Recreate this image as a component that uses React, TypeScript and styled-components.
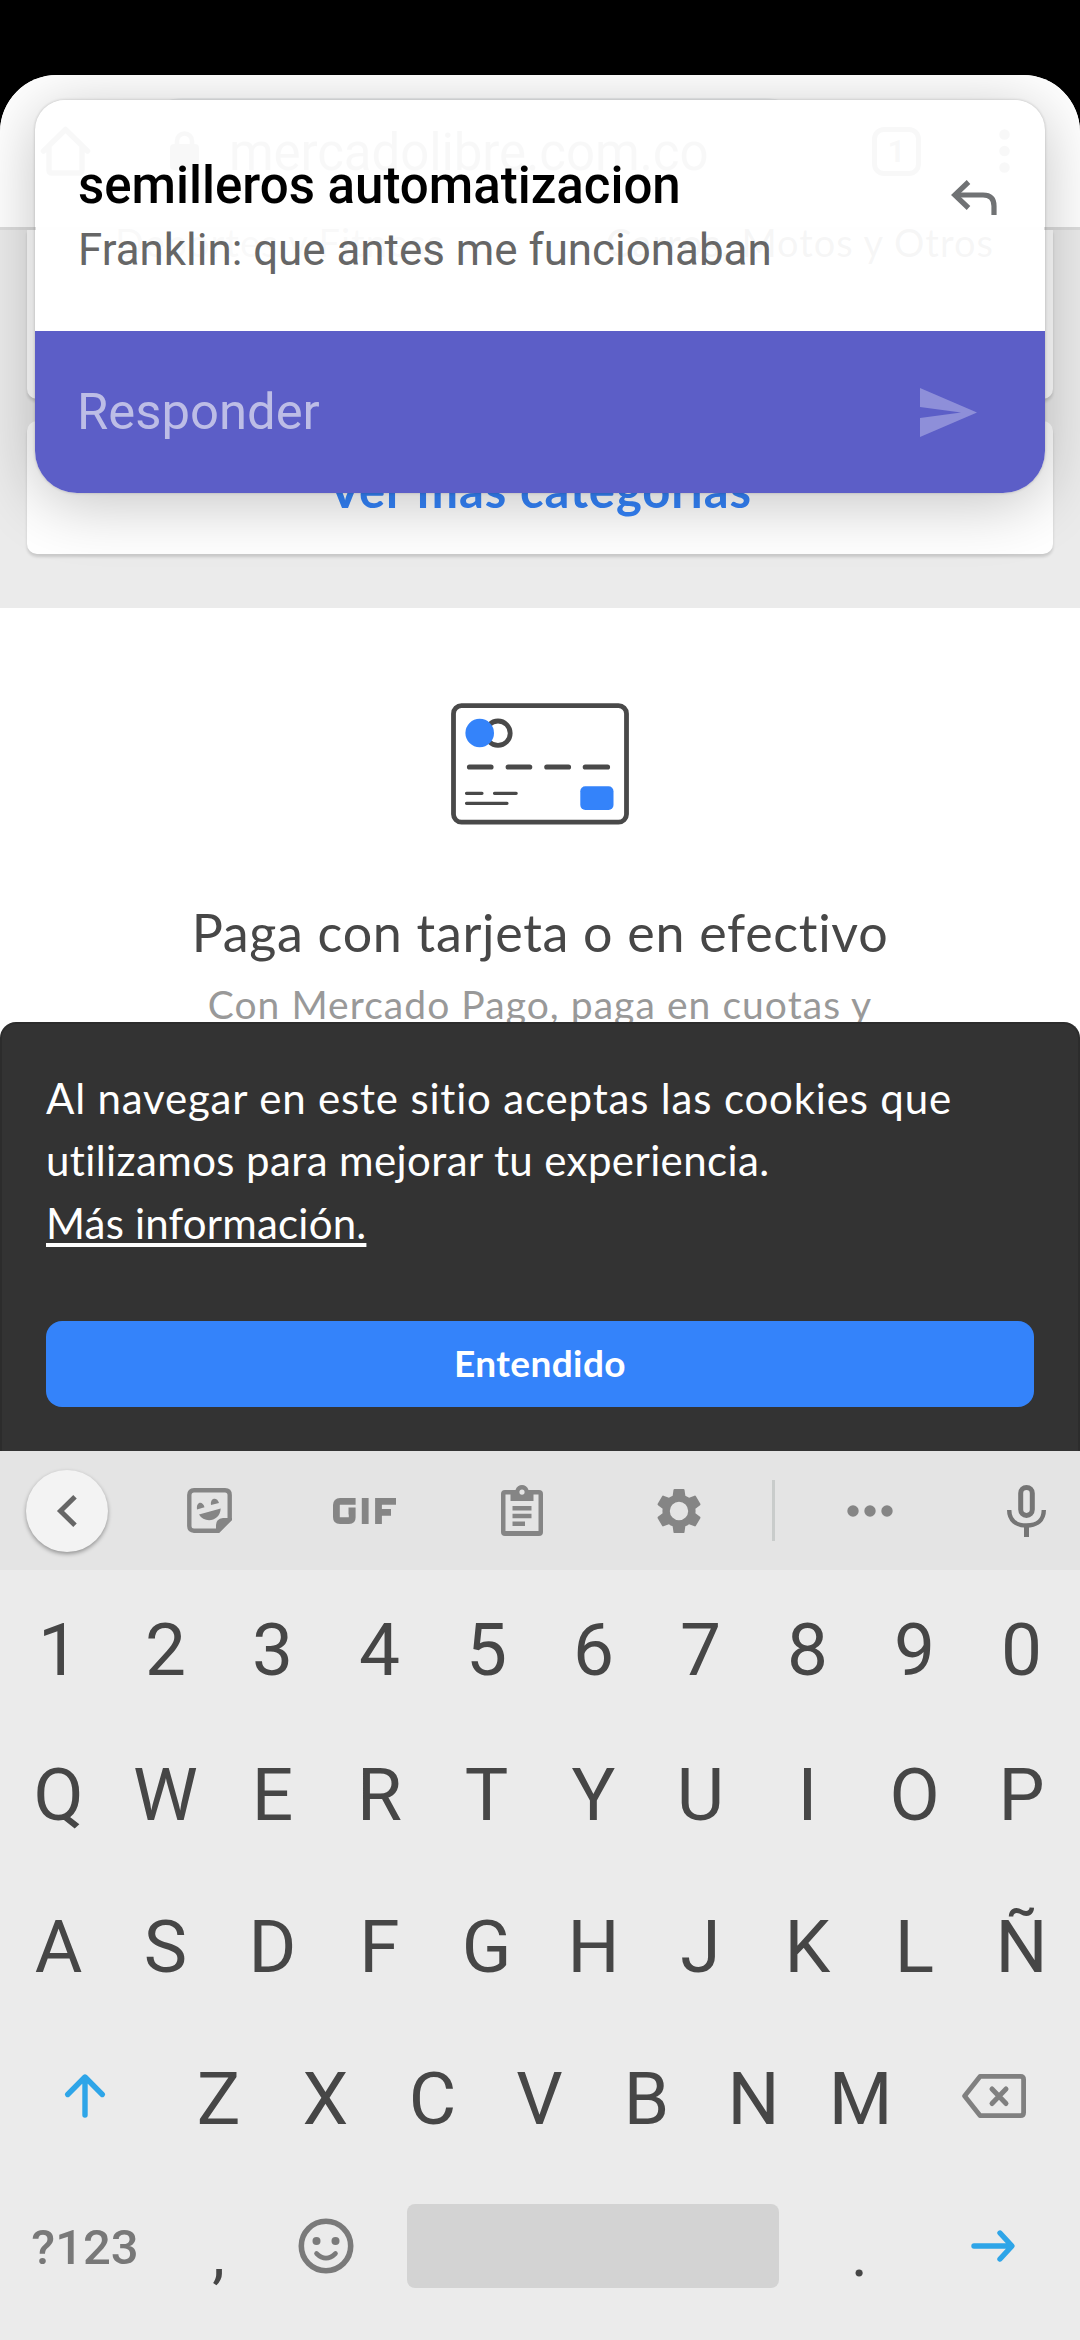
import React from "react";
import styled, { createGlobalStyle } from "styled-components";

const Global = createGlobalStyle`
  * { box-sizing: border-box; }
  html, body { margin: 0; padding: 0; background: #000; }
  body { width: 1080px; height: 2340px; overflow: hidden; font-family: Roboto, "Liberation Sans", sans-serif; }
  svg { display: block; overflow: visible; }
`;

const Phone = styled.div`
  position: relative;
  width: 1080px;
  height: 2340px;
  display: flex;
  flex-direction: column;
  background: #000;
  overflow: hidden;
`;

const StatusBar = styled.div`
  flex: 0 0 75px;
  background: #000;
`;

const Browser = styled.div`
  position: relative;
  flex: 0 0 1376px;
  display: flex;
  flex-direction: column;
  border-radius: 57px 57px 0 0;
  overflow: hidden;
  background: #fff;
  font-variant-ligatures: none;
`;

const AddressBar = styled.div`
  flex: 0 0 155px;
  display: flex;
  align-items: flex-start;
  padding: 23px 26px 0 41px;
  background: #fff;
  border-bottom: 3px solid #dcdcdc;
  color: #5f6368;
`;

const HomeSlot = styled.div`
  width: 89px;
  padding-top: 29px;
`;

const UrlPill = styled.div`
  width: 688px;
  height: 107px;
  border-radius: 54px;
  background: #f1f3f4;
  display: flex;
  align-items: center;
  padding: 0 0 2px 40px;
  gap: 30px;
`;

const Url = styled.span`
  font-size: 51px;
  line-height: 60px;
  letter-spacing: -0.1px;
  padding-top: 5px;
`;

const TabsSlot = styled.div`
  padding: 29px 0 0 54px;
`;

const TabCount = styled.div`
  width: 49px;
  height: 49px;
  border: 5px solid currentColor;
  border-radius: 12px;
  font-size: 31px;
  font-weight: 700;
  line-height: 39px;
  text-align: center;
`;

const MenuSlot = styled.div`
  padding: 31px 0 0 78px;
`;

const Categories = styled.div`
  flex: 0 0 378px;
  background: #ebebeb;
  padding: 0 27px;
  display: flex;
  flex-direction: column;
  gap: 22px;
`;

const siteFont = `Lato, "Open Sans", sans-serif`;

const CategoryCard = styled.div`
  height: 169px;
  background: #fff;
  border-radius: 0 0 10px 10px;
  box-shadow: 0 3px 3px rgba(0, 0, 0, 0.14);
  display: flex;
  justify-content: space-between;
  padding: 0 59px 0 88px;
  font-family: ${siteFont};
  font-size: 38px;
  line-height: 46px;
  letter-spacing: 1px;
  color: #333;
`;

const CategoryName = styled.span<{ $faded?: boolean }>`
  height: 60px;
  margin-top: -11px;
  white-space: nowrap;
  opacity: ${(p) => (p.$faded ? 0.7 : 1)};
`;

const MoreCard = styled.div`
  height: 133px;
  background: #fff;
  border-radius: 10px;
  box-shadow: 0 3px 3px rgba(0, 0, 0, 0.14);
  display: flex;
  justify-content: center;
  padding-top: 40px;
`;

const MoreLink = styled.span`
  font-family: ${siteFont};
  font-size: 49px;
  font-weight: 700;
  line-height: 56px;
  letter-spacing: 0.9px;
  color: #3483fa;
  white-space: nowrap;
`;

const Payment = styled.div`
  flex: 1;
  background: #fff;
  display: flex;
  flex-direction: column;
  align-items: center;
  padding-top: 95px;
`;

const PaymentTitle = styled.h2`
  margin: 73px 0 0;
  font-family: ${siteFont};
  font-size: 52px;
  font-weight: 400;
  line-height: 68px;
  letter-spacing: 0.7px;
  color: #474747;
  white-space: nowrap;
`;

const PaymentText = styled.p`
  margin: 14px 0 0;
  font-family: ${siteFont};
  font-size: 39px;
  line-height: 48px;
  letter-spacing: 1.05px;
  color: #999;
  white-space: nowrap;
`;

const CookieBanner = styled.section`
  position: absolute;
  left: 0;
  right: 0;
  bottom: 0;
  height: 429px;
  border-radius: 16px 16px 0 0;
  background: #333;
  border: 2px solid #2c2c2c;
  border-bottom: 0;
  padding: 43px 44px 44px;
  display: flex;
  flex-direction: column;
  justify-content: space-between;
`;

const CookieText = styled.div`
  font-family: ${siteFont};
  font-size: 42px;
  line-height: 62.4px;
  color: #fff;
  white-space: nowrap;
`;

const CookieLine = styled.div<{ $track: number }>`
  letter-spacing: ${(p) => p.$track}px;
`;

const CookieLink = styled.span`
  text-decoration: underline;
  text-decoration-thickness: 4px;
  text-underline-offset: 4px;
  text-decoration-skip-ink: none;
`;

const AcceptButton = styled.button`
  height: 86px;
  border: 0;
  border-radius: 16px;
  background: #3483fa;
  color: #fff;
  font-family: ${siteFont};
  font-size: 37px;
  font-weight: 700;
  line-height: 46px;
  letter-spacing: 0.4px;
  padding: 0 0 3px;
`;

const Notification = styled.aside`
  position: absolute;
  left: 35px;
  top: 100px;
  width: 1010px;
  height: 393px;
  border-radius: 30px 30px 42px 42px;
  box-shadow: 0 10px 64px rgba(0, 0, 0, 0.24), 0 0 3px rgba(0, 0, 0, 0.22);
  display: flex;
  flex-direction: column;
`;

const Message = styled.div`
  flex: 0 0 231px;
  margin: 0 1px;
  border-radius: 30px 30px 0 0;
  background: rgba(255, 255, 255, 0.957);
  display: flex;
  justify-content: space-between;
  padding: 55px 47px 0 42px;
`;

const MessageTitle = styled.div`
  font-size: 51px;
  line-height: 62px;
  font-weight: 500;
  color: #000;
  white-space: nowrap;
`;

const MessageBody = styled.div`
  font-size: 43.9px;
  line-height: 66px;
  color: #666;
  white-space: nowrap;
`;

const ReplySlot = styled.div`
  padding-top: 25px;
`;

const ReplyBar = styled.div`
  flex: 1;
  border-radius: 0 0 42px 42px;
  background: #5c5ec7;
  display: flex;
  align-items: center;
  justify-content: space-between;
  padding: 0 68px 0 42px;
  font-size: 50.8px;
  line-height: 60px;
  color: #bdbde6;
`;

const Keyboard = styled.div`
  flex: 1;
  display: flex;
  flex-direction: column;
  background: #ebebeb;
`;

const Toolbar = styled.div`
  flex: 0 0 119px;
  margin-bottom: 7px;
  background: #e4e4e4;
  display: flex;
  align-items: center;
  color: #858585;
`;

const BackCircle = styled.div`
  width: 82px;
  height: 82px;
  margin-left: 26px;
  border-radius: 50%;
  background: #f3f3f3;
  box-shadow: 0 2px 4px rgba(0, 0, 0, 0.36);
  display: flex;
  align-items: center;
  justify-content: center;
`;

const ToolSlot = styled.div<{ $gap: number }>`
  margin-left: ${(p) => p.$gap}px;
`;

const ToolDivider = styled.div`
  width: 3px;
  height: 61px;
  margin-left: 70px;
  background: #c9cccb;
`;

const KeyRow = styled.div<{ $height: number }>`
  flex: 0 0 ${(p) => p.$height}px;
  display: flex;
  padding: 0 5px;
`;

const Key = styled.div`
  width: 107px;
  display: flex;
  align-items: center;
  justify-content: center;
  font-size: 73px;
  line-height: 86px;
  color: #464646;
`;

const WideKey = styled(Key)<{ $lift?: number }>`
  width: 160px;
  padding-bottom: ${(p) => p.$lift ?? 0}px;
`;

const SymbolsKey = styled(WideKey)`
  font-size: 49px;
  font-weight: 500;
  color: #787878;
  padding-top: 4px;
`;

const PunctuationKey = styled(Key)`
  font-size: 64px;
  padding-top: 17px;
`;

const SpaceKey = styled.div`
  width: 372px;
  height: 84px;
  margin: 0 27px 0 28px;
  align-self: center;
  border-radius: 8px;
  background: #d3d3d3;
`;

const HomeIcon = () => (
  <svg width="49" height="49" viewBox="0 0 49 49" fill="none" stroke="currentColor" strokeWidth="5.5" strokeLinejoin="round" strokeLinecap="round">
    <path d="M2.5 24 24.500 2.500 46.500 24M8 20V43Q8 46 11 46H38Q41 46 41 43V20" />
  </svg>
);

const LockIcon = () => (
  <svg width="29" height="39" viewBox="0 0 29 39">
    <rect x="0" y="13" width="29" height="26" rx="4" fill="currentColor" />
    <path d="M7 15V10a7.500 7.500 0 0 1 15 0V15" fill="none" stroke="currentColor" strokeWidth="4.500" />
  </svg>
);

const MenuDots = () => (
  <svg width="11" height="44" viewBox="0 0 11 44" fill="currentColor">
    <circle cx="5.500" cy="5.500" r="5.300" />
    <circle cx="5.500" cy="22" r="5.300" />
    <circle cx="5.500" cy="38.500" r="5.300" />
  </svg>
);

const CreditCard = () => (
  <svg width="178" height="122" viewBox="451 703 178 122" fill="none" stroke="#494949" strokeLinecap="round">
    <rect x="453.500" y="705.700" width="173" height="116.500" rx="8" strokeWidth="4.800" />
    <circle cx="498" cy="733.200" r="12.200" strokeWidth="4.800" />
    <circle cx="479.700" cy="733" r="14.300" fill="#3483fa" stroke="none" />
    <path d="M469.500 767H491M508.200 767H529.700M546.800 767H568.500M585.300 767H607.500" strokeWidth="5.200" />
    <path d="M466.500 793.300H482M494.500 793.300H516.200M466.500 803.300H507" strokeWidth="3.200" />
    <rect x="580.300" y="786.300" width="33.200" height="23.700" rx="5" fill="#3483fa" stroke="none" />
  </svg>
);

const ReplyIcon = () => (
  <svg width="45" height="35" viewBox="0 0 45 35" fill="none" stroke="#707274" strokeWidth="5.200">
    <path d="M16.500 2 2.800 15 16.500 28" strokeLinejoin="miter" />
    <path d="M3.500 15H31Q42 15 42 26V35" />
  </svg>
);

const SendIcon = () => (
  <svg width="57" height="49" viewBox="0 0 57 49" fill="#8e8fd9">
    <path d="M0 0 57 24.500 0 49V30L41 24.500 0 19Z" />
  </svg>
);

const BackIcon = () => (
  <svg width="20" height="32" viewBox="0 0 20 32" fill="none" stroke="#666" strokeWidth="5">
    <path d="M18 1.800 3.500 16 18 30.200" />
  </svg>
);

const StickerIcon = () => (
  <svg width="45" height="45" viewBox="0 0 45 45">
    <path d="M7 2.300H38Q42.700 2.300 42.700 7V31L31 42.700H7Q2.300 42.700 2.300 38V7Q2.300 2.300 7 2.300Z" fill="none" stroke="currentColor" strokeWidth="4.400" />
    <path d="M45 30H36Q29 31 29 37V45H32L45 32Z" fill="currentColor" />
    <path d="M10 21.500C9 13 16 13 17.500 19.200ZM24 17C23 9 30.500 9 32 15ZM12 26.500 33.700 20.500C33 34 17 35.500 12 26.500Z" fill="currentColor" />
  </svg>
);

const GifIcon = () => (
  <svg width="63" height="26" viewBox="0 0 63 26" fill="none" stroke="currentColor" strokeWidth="6.800">
    <path d="M22.600 3.400H7Q3.400 3.400 3.400 7V19Q3.400 22.600 7 22.600H16Q19.200 22.600 19.200 19.500V13H15.500" />
    <path d="M32.200 0V26M45.500 26V3.400H63M45.500 14.300H58" />
  </svg>
);

const ClipboardIcon = () => (
  <svg width="42" height="51" viewBox="0 0 42 51">
    <path fillRule="evenodd" fill="currentColor" d="M4 5H14.500C16.500-1.600 25.500-1.600 27.500 5H38Q42 5 42 9V47Q42 51 38 51H4Q0 51 0 47V9Q0 5 4 5ZM4.500 9.500V46H37.500V9.500H32.500V16H9.500V9.500ZM21 4.500A2.600 2.600 0 1 0 21 9.700A2.600 2.600 0 1 0 21 4.500Z" />
    <path d="M11.500 23.200H30.500M11.500 31H30.500M11.500 38.800H24" stroke="currentColor" strokeWidth="4.600" />
  </svg>
);

const GearIcon = () => (
  <svg width="46" height="46" viewBox="2.200 2 19.600 20" fill="currentColor">
    <path d="M19.140 12.940c.04-.3.060-.610.060-.940 0-.320-.020-.640-.070-.940l2.030-1.580c.180-.140.230-.410.120-.610l-1.920-3.320c-.120-.220-.370-.290-.590-.220l-2.390.960c-.5-.380-1.030-.7-1.620-.940l-.360-2.540c-.040-.240-.240-.410-.480-.410h-3.840c-.240 0-.430.170-.470.410l-.360 2.540c-.590.240-1.130.570-1.620.940l-2.390-.960c-.220-.080-.470 0-.590.220L2.740 8.870c-.120.210-.080.470.120.610l2.030 1.580c-.050.3-.090.630-.090.940s.020.640.070.940l-2.030 1.580c-.180.140-.230.410-.120.610l1.920 3.320c.120.220.370.290.590.220l2.390-.960c.5.380 1.030.7 1.620.940l.360 2.540c.050.240.240.410.480.410h3.840c.240 0 .440-.170.470-.410l.360-2.540c.590-.240 1.130-.560 1.620-.940l2.390.960c.220.080.470 0 .590-.220l1.920-3.320c.120-.220.070-.470-.120-.610l-2.010-1.580zM12 16a4 4 0 1 1 0-8 4 4 0 0 1 0 8z" />
  </svg>
);

const MoreIcon = () => (
  <svg width="46" height="12" viewBox="0 0 46 12" fill="currentColor">
    <circle cx="6" cy="6" r="5.700" />
    <circle cx="23" cy="6" r="5.700" />
    <circle cx="40" cy="6" r="5.700" />
  </svg>
);

const MicIcon = () => (
  <svg width="39" height="52" viewBox="0 0 39 52" fill="none" stroke="#757575">
    <rect x="13.700" y="2.400" width="11.600" height="28" rx="5.800" strokeWidth="5" />
    <path d="M2.200 25C2.200 35 9 40.500 19.500 40.500S36.800 35 36.800 25" strokeWidth="4.400" />
    <path d="M19.500 40V52" strokeWidth="5" />
  </svg>
);

const ShiftIcon = () => (
  <svg width="40" height="44" viewBox="0 0 40 44" fill="none" stroke="#2ea5e8" strokeWidth="5.400" strokeLinecap="round" strokeLinejoin="round">
    <path d="M2.700 20.500 20 3 37.300 20.500M20 4V41" />
  </svg>
);

const BackspaceIcon = () => (
  <svg width="64" height="44" viewBox="0 0 64 44" fill="none" stroke="#808080" strokeLinejoin="round" strokeLinecap="round">
    <path d="M18 2.400H58.500Q61.600 2.400 61.600 5.500V38.500Q61.600 41.600 58.500 41.600H18L2.600 22Z" strokeWidth="4.800" />
    <path d="M30 15 44 29.500M44 15 30 29.500" strokeWidth="5" />
  </svg>
);

const SmileIcon = () => (
  <svg width="56" height="56" viewBox="0 0 56 56" fill="none" stroke="#7a7a7a">
    <circle cx="28" cy="28" r="24.700" strokeWidth="5.600" />
    <circle cx="18.500" cy="23" r="4" fill="#7a7a7a" stroke="none" />
    <circle cx="37.500" cy="23" r="4" fill="#7a7a7a" stroke="none" />
    <path d="M18.500 35.500Q28 45 37.500 35.500" strokeWidth="4.600" strokeLinecap="round" />
  </svg>
);

const EnterIcon = () => (
  <svg width="44" height="32" viewBox="0 0 44 32" fill="none" stroke="#2ea5e8" strokeWidth="5.400" strokeLinecap="round" strokeLinejoin="round">
    <path d="M3 16H40M29 3 41 16 29 29" />
  </svg>
);

export default function App() {
  return (
    <>
      <Global />
      <Phone>
        <StatusBar />
        <Browser>
          <AddressBar>
            <HomeSlot><HomeIcon /></HomeSlot>
            <UrlPill><LockIcon /><Url>mercadolibre.com.co</Url></UrlPill>
            <TabsSlot><TabCount>1</TabCount></TabsSlot>
            <MenuSlot><MenuDots /></MenuSlot>
          </AddressBar>
          <Categories>
            <CategoryCard>
              <CategoryName $faded>Deportes y Fitness</CategoryName>
              <CategoryName>Carros, Motos y Otros</CategoryName>
            </CategoryCard>
            <MoreCard><MoreLink>Ver más categorías</MoreLink></MoreCard>
          </Categories>
          <Payment>
            <CreditCard />
            <PaymentTitle>Paga con tarjeta o en efectivo</PaymentTitle>
            <PaymentText>Con Mercado Pago, paga en cuotas y</PaymentText>
          </Payment>
          <CookieBanner>
            <CookieText>
              <CookieLine $track={0.83}>Al navegar en este sitio aceptas las cookies que</CookieLine>
              <CookieLine $track={0.4}>utilizamos para mejorar tu experiencia.</CookieLine>
              <CookieLine $track={0.2}><CookieLink>Más información.</CookieLink></CookieLine>
            </CookieText>
            <AcceptButton>Entendido</AcceptButton>
          </CookieBanner>
        </Browser>
        <Keyboard>
          <Toolbar>
            <BackCircle><BackIcon /></BackCircle>
            <ToolSlot $gap={79}><StickerIcon /></ToolSlot>
            <ToolSlot $gap={101}><GifIcon /></ToolSlot>
            <ToolSlot $gap={105}><ClipboardIcon /></ToolSlot>
            <ToolSlot $gap={113}><GearIcon /></ToolSlot>
            <ToolDivider />
            <ToolSlot $gap={72}><MoreIcon /></ToolSlot>
            <ToolSlot $gap={114}><MicIcon /></ToolSlot>
          </Toolbar>
          <KeyRow $height={146}>{[..."1234567890"].map((k) => <Key key={k}>{k}</Key>)}</KeyRow>
          <KeyRow $height={144}>{[..."QWERTYUIOP"].map((k) => <Key key={k}>{k}</Key>)}</KeyRow>
          <KeyRow $height={160}>{[..."ASDFGHJKLÑ"].map((k) => <Key key={k}>{k}</Key>)}</KeyRow>
          <KeyRow $height={144}>
            <WideKey $lift={6}><ShiftIcon /></WideKey>
            {[..."ZXCVBNM"].map((k) => <Key key={k}>{k}</Key>)}
            <WideKey $lift={7}><BackspaceIcon /></WideKey>
          </KeyRow>
          <KeyRow $height={150}>
            <SymbolsKey>?123</SymbolsKey>
            <PunctuationKey>,</PunctuationKey>
            <Key><SmileIcon /></Key>
            <SpaceKey />
            <PunctuationKey>.</PunctuationKey>
            <WideKey><EnterIcon /></WideKey>
          </KeyRow>
        </Keyboard>
        <Notification>
          <Message>
            <div>
              <MessageTitle>semilleros automatizacion</MessageTitle>
              <MessageBody>Franklin: que antes me funcionaban</MessageBody>
            </div>
            <ReplySlot><ReplyIcon /></ReplySlot>
          </Message>
          <ReplyBar>Responder<SendIcon /></ReplyBar>
        </Notification>
      </Phone>
    </>
  );
}
